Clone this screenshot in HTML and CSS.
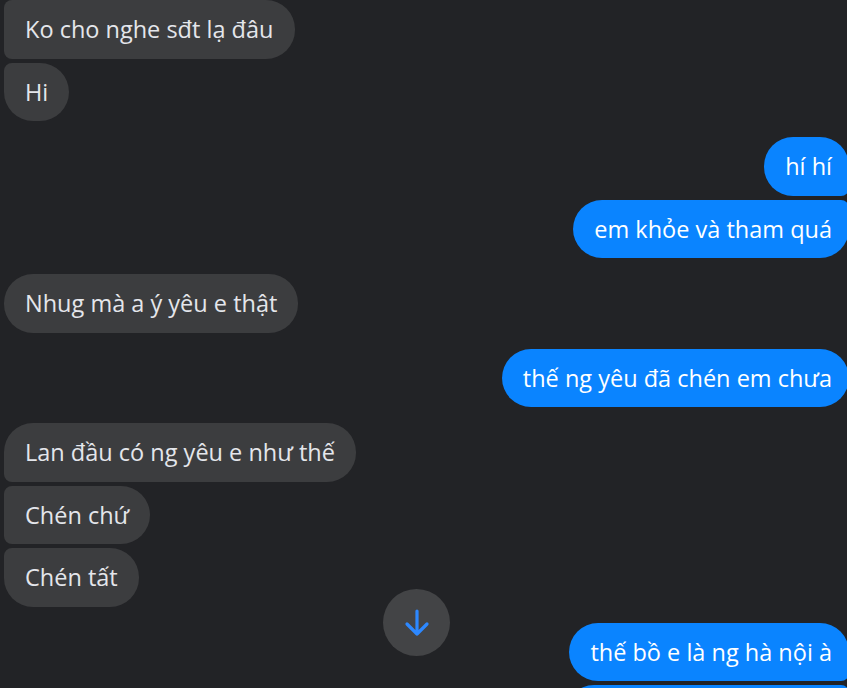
FILE: index.html
```html
<!DOCTYPE html>
<html lang="vi">
<head>
<meta charset="utf-8">
<link rel="stylesheet" href="styles.css">
</head>
<body>
<div class="chat">
  <div class="group left">
    <div class="msg mid">Ko cho nghe sđt lạ đâu</div>
    <div class="msg last">Hi</div>
  </div>
  <div class="group right">
    <div class="msg first">hí hí</div>
    <div class="msg last">em khỏe và tham quá</div>
  </div>
  <div class="group left">
    <div class="msg">Nhug mà a ý yêu e thật</div>
  </div>
  <div class="group right">
    <div class="msg">thế ng yêu đã chén em chưa</div>
  </div>
  <div class="group left">
    <div class="msg first">Lan đầu có ng yêu e như thế</div>
    <div class="msg mid">Chén chứ</div>
    <div class="msg last">Chén tất</div>
  </div>
  <div class="group right">
    <div class="msg first">thế bồ e là ng hà nội à</div>
    <div class="msg mid stub"></div>
  </div>
</div>
<div class="scroll-btn">
  <svg width="28" height="30" viewBox="0 0 28 30"><path d="M14 3 V26 M4 16 L14 26 L24 16" fill="none" stroke="#2d88ff" stroke-width="3.2" stroke-linecap="round" stroke-linejoin="round"/></svg>
</div>
</body>
</html>
```
FILE: styles.css
```css
html, body {
  margin: 0;
  padding: 0;
  background: #222326;
  overflow: hidden;
  height: 688px;
}
body {
  font-family: "Open Sans", "Noto Sans", sans-serif;
  position: relative;
}
.chat {
  display: flex;
  flex-direction: column;
  gap: 16px;
  padding: 0 0 0 4px;
  margin-right: -2px;
}
.group {
  display: flex;
  flex-direction: column;
  gap: 4px;
}
.group.left { align-items: flex-start; }
.group.right { align-items: flex-end; }
.msg {
  font-size: 23.5px;
  font-weight: 500;
  line-height: 30.5px;
  padding: 14px 21px 14px 21px;
  border-radius: 29px;
  white-space: nowrap;
}
.left .msg {
  background: #3c3d3f;
  color: #e4e6eb;
}
.right .msg {
  background: #0a84ff;
  color: #ffffff;
  padding-right: 17px;
}
.right .msg.stub {
  width: 246px;
  height: 30.5px;
}
.left .msg.first { border-bottom-left-radius: 8px; }
.left .msg.mid { border-top-left-radius: 8px; border-bottom-left-radius: 8px; }
.left .msg.last { border-top-left-radius: 8px; }
.right .msg.first { border-bottom-right-radius: 8px; }
.right .msg.mid { border-top-right-radius: 8px; border-bottom-right-radius: 8px; }
.right .msg.last { border-top-right-radius: 8px; }
.scroll-btn {
  position: absolute;
  left: 383px;
  top: 589px;
  width: 67px;
  height: 67px;
  border-radius: 50%;
  background: #434446;
  display: flex;
  align-items: center;
  justify-content: center;
}
```
